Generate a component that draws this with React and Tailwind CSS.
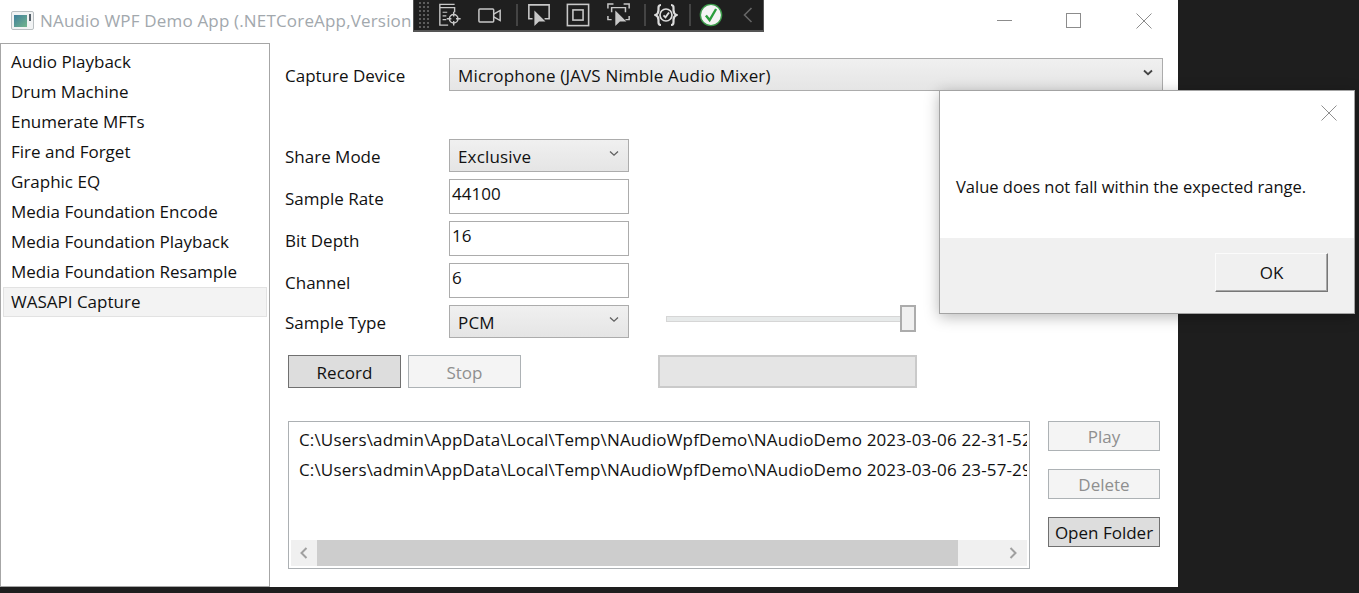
import React from "react";

const NAV_ITEMS = [
  "Audio Playback",
  "Drum Machine",
  "Enumerate MFTs",
  "Fire and Forget",
  "Graphic EQ",
  "Media Foundation Encode",
  "Media Foundation Playback",
  "Media Foundation Resample",
  "WASAPI Capture",
];

const RECORDINGS = [
  "C:\\Users\\admin\\AppData\\Local\\Temp\\NAudioWpfDemo\\NAudioDemo 2023-03-06 22-31-52.wav",
  "C:\\Users\\admin\\AppData\\Local\\Temp\\NAudioWpfDemo\\NAudioDemo 2023-03-06 23-57-29.wav",
];

function AppIcon() {
  return (
    <svg width="23" height="20" viewBox="0 0 23 20" className="shrink-0">
      <defs>
        <linearGradient id="appfill" x1="0" y1="0" x2="1" y2="1">
          <stop offset="0" stopColor="#3f7f9c" />
          <stop offset="1" stopColor="#72b58c" />
        </linearGradient>
      </defs>
      <rect x="0.5" y="0.5" width="22" height="18" rx="1.5" fill="#f1f3f4" stroke="#b9bfc2" />
      <rect x="3" y="4" width="13" height="12" fill="url(#appfill)" />
      <rect x="18" y="3" width="2" height="7" fill="#55616a" />
    </svg>
  );
}

function Chevron({ strong }) {
  return (
    <svg width="10" height="7" viewBox="0 0 10 7">
      <path
        d="M1 1.5 L5 5.2 L9 1.5"
        fill="none"
        stroke={strong ? "#444444" : "#606060"}
        strokeWidth={strong ? 1.8 : 1.3}
      />
    </svg>
  );
}

function ComboBox({ value, strong, className }) {
  return (
    <div
      className={`flex h-[33px] items-center justify-between border border-[#acacac] bg-gradient-to-b from-[#f0f0f0] to-[#e5e5e5] pl-2 pr-[9px] ${className}`}
    >
      <span className="pt-[2px] tracking-[0.17px] text-[#111]">{value}</span>
      <span className="mb-1 flex">
        <Chevron strong={strong} />
      </span>
    </div>
  );
}

function TextBox({ value }) {
  return (
    <div className="h-[35px] w-[180px] border border-[#acacac] bg-white pl-[2px] pt-px leading-[26px] text-[#111]">
      {value}
    </div>
  );
}

function Button({ children, disabled, className = "" }) {
  return (
    <div
      className={`flex items-center justify-center border ${
        disabled
          ? "border-[#adb2b5] bg-[#f4f4f4] text-[#8f8f8f]"
          : "border-[#707070] bg-[#dddddd] text-[#111]"
      } ${className}`}
    >
      {children}
    </div>
  );
}

function FieldRow({ label, tall, children }) {
  return (
    <div className="flex items-start">
      <div className={`w-[164px] text-[#111] ${tall ? "pt-[7px]" : "pt-[5px]"}`}>{label}</div>
      {children}
    </div>
  );
}

// Snoop-style debugger strip that floats above the title bar
function DebugToolbar() {
  const stroke = "#c8c8c8";
  return (
    <div className="absolute left-[413px] top-0 flex h-[32px] w-[351px] items-center border-b-2 border-l border-r border-[#555] bg-[#1f1f1f]">
      <svg width="10" height="28" viewBox="0 0 10 28" className="ml-[5px]">
        <path d="M1 1v26M5 1v26M9 1v26" stroke="#5c5c5c" strokeWidth="2" strokeDasharray="2 2" />
      </svg>
      <svg width="24" height="24" viewBox="0 0 26 26" className="ml-[9px]" fill="none" stroke={stroke}>
        <path d="M2 12V1.5h16M2 5h16v5M2 12v12h9" strokeWidth="1.5" />
        <path d="M5 10h5M5 14h4M5 18h4" strokeWidth="1.3" />
        <circle cx="17" cy="17" r="4.6" strokeWidth="1.6" />
        <path d="M17 9.5v5M17 19.5v5M9.5 17h5M19.5 17h5" strokeWidth="1.5" />
      </svg>
      <svg width="24" height="17" viewBox="0 0 26 18" className="ml-[16px]" fill="none" stroke={stroke} strokeWidth="1.6">
        <rect x="1" y="2" width="16" height="14" rx="1" />
        <path d="M17 7.5l7-4v11l-7-4" />
      </svg>
      <div className="ml-[14px] h-[22px] w-[2px] bg-[#444]" />
      <svg width="24" height="24" viewBox="0 0 26 26" className="ml-[9px]" fill="none">
        <path d="M6 17H2V2h22v15h-5" stroke={stroke} strokeWidth="1.7" />
        <path d="M8 8v17l5-5h7z" fill={stroke} />
      </svg>
      <svg width="24" height="24" viewBox="0 0 26 26" className="ml-[15px]" fill="none" stroke={stroke}>
        <rect x="1.5" y="1.5" width="23" height="23" strokeWidth="1.7" />
        <rect x="7.5" y="7.5" width="11" height="11" strokeWidth="1.7" />
      </svg>
      <svg width="24" height="24" viewBox="0 0 26 26" className="ml-[17px]" fill="none">
        <path
          d="M1 6V1h6M18 1h6v5M1 14v4h4M24 14v4h-4M5 10V5h15v5"
          stroke={stroke}
          strokeWidth="1.6"
        />
        <path d="M9 8v17l5-5h7z" fill={stroke} />
      </svg>
      <div className="ml-[13px] h-[22px] w-[2px] bg-[#444]" />
      <svg width="24" height="24" viewBox="0 0 24 24" className="ml-[8px]" fill="none" stroke="#dcdcdc" strokeWidth="2.2">
        <path d="M7 2C4 2 4.500 4.500 4.500 7S4 11 1.500 12C4 13 4.500 14.500 4.500 17S4 22 7 22" />
        <path d="M17 2c3 0 2.500 2.500 2.500 5s.5 4 3 5c-2.500 1-3 2.500-3 5s.5 5-2.500 5" />
        <circle cx="12" cy="12" r="6" strokeWidth="1.700" />
        <path d="M9.500 12.300l2 2L15 9.500" strokeWidth="1.900" />
      </svg>
      <div className="ml-[11px] h-[22px] w-[2px] bg-[#444]" />
      <svg width="24" height="24" viewBox="0 0 26 26" className="ml-[8px]">
        <circle cx="13" cy="13" r="11.5" fill="#f4f4f4" stroke="#3c9a4a" strokeWidth="1.5" />
        <path d="M7.5 13.5l4 5L18.5 6.5" fill="none" stroke="#2b9e3c" strokeWidth="2.6" />
      </svg>
      <svg width="10" height="16" viewBox="0 0 10 16" className="ml-[20px]" fill="none" stroke="#666" strokeWidth="1.6">
        <path d="M8.5 1L1.5 8l7 7" />
      </svg>
    </div>
  );
}

function ErrorDialog() {
  return (
    <div className="absolute left-[939px] top-[90px] flex h-[224px] w-[416px] flex-col border border-[#a3a3a3] bg-white shadow-[0_3px_14px_rgba(0,0,0,0.28)]">
      <div className="relative flex-1">
        <svg width="16" height="16" viewBox="0 0 16 16" className="absolute right-[17px] top-[14px]" fill="none" stroke="#8f8f8f">
          <path d="M0.5 0.5l15 15M15.5 0.5l-15 15" />
        </svg>
        <div className="pl-4 pt-[84px] text-[16.5px] leading-6 text-[#111]">
          Value does not fall within the expected range.
        </div>
      </div>
      <div className="flex h-[75px] justify-end bg-[#f0f0f0] pr-[26px] pt-[15px]">
        <div className="flex h-[39px] w-[113px] items-center justify-center border border-[#fbfbfb] border-b-[#777] border-r-[#777] bg-[#f0f0f0] text-[#111] shadow-[inset_-1px_-1px_0_#a8a8a8]">
          OK
        </div>
      </div>
    </div>
  );
}

export default function App() {
  return (
    <div className="relative h-[593px] w-[1359px] overflow-hidden bg-[#1e1e1e] font-['Open_Sans','Noto_Sans',sans-serif] text-[17px]">
      <div className="flex h-[587px] w-[1178px] flex-col bg-white">
        {/* Title bar */}
        <div className="flex h-[43px] shrink-0 items-center pb-[2px] pl-[11px]">
          <AppIcon />
          <span className="ml-[6px] whitespace-nowrap tracking-[0.17px] text-[#a2a8ad]">
            NAudio WPF Demo App (.NETCoreApp,Version
          </span>
          <div className="ml-auto flex items-center pr-[26px]">
            <div className="h-px w-[15px] bg-[#8c8c8c]" />
            <div className="ml-[54px] h-[15px] w-[15px] border border-[#8c8c8c]" />
            <svg width="16" height="16" viewBox="0 0 16 16" className="ml-[55px]" fill="none" stroke="#8c8c8c">
              <path d="M0.5 0.5l15 15M15.5 0.5l-15 15" />
            </svg>
          </div>
        </div>

        <div className="flex min-h-0 flex-1">
          {/* Demo list */}
          <div className="w-[270px] shrink-0 border border-[#a6a6a6] pl-[2px] pr-[2px] pt-[3px]">
            {NAV_ITEMS.map((item) => (
              <div
                key={item}
                className={`h-[30px] border pl-[7px] leading-[28px] text-[#111] ${
                  item === "WASAPI Capture" ? "border-[#e2e2e2] bg-[#f3f3f3]" : "border-transparent"
                }`}
              >
                {item}
              </div>
            ))}
          </div>

          {/* Capture panel */}
          <div className="min-w-0 flex-1 pl-[15px] pr-[15px] pt-[15px]">
            <FieldRow label="Capture Device">
              <ComboBox value="Microphone (JAVS Nimble Audio Mixer)" strong className="w-[714px]" />
            </FieldRow>

            <div className="mt-[48px] flex flex-col gap-[7px]">
              <FieldRow label="Share Mode">
                <ComboBox value="Exclusive" className="w-[180px]" />
              </FieldRow>
              <FieldRow label="Sample Rate" tall>
                <TextBox value="44100" />
              </FieldRow>
              <FieldRow label="Bit Depth" tall>
                <TextBox value="16" />
              </FieldRow>
              <FieldRow label="Channel" tall>
                <TextBox value="6" />
              </FieldRow>
              <FieldRow label="Sample Type">
                <ComboBox value="PCM" className="w-[180px]" />
                <div className="relative ml-[37px] h-[27px] w-[250px]">
                  <div className="mt-[11px] h-[6px] border border-[#d6d6d6] bg-[#e7eaea]" />
                  <div className="absolute right-0 top-0 h-[27px] w-[16px] border-2 border-[#acacac] bg-[#f0f0f0]" />
                </div>
              </FieldRow>
            </div>

            <div className="mt-[17px] flex pl-[3px]">
              <Button className="h-[33px] w-[113px] pt-[2px]">Record</Button>
              <Button disabled className="ml-[7px] h-[33px] w-[113px] pt-[2px]">
                Stop
              </Button>
              <div className="ml-[137px] h-[33px] w-[259px] border-2 border-[#cacaca] bg-[#e5e5e5]" />
            </div>

            <div className="mt-[33px] flex pl-[3px]">
              <div className="flex h-[148px] w-[742px] flex-col border border-[#acb0b3] p-[2px]">
                <div className="min-h-0 flex-1 overflow-hidden pl-[8px] pt-px">
                  {RECORDINGS.map((path) => (
                    <div key={path} className="h-[30px] whitespace-nowrap leading-[30px] tracking-[0.15px] text-[#111]">
                      {path}
                    </div>
                  ))}
                </div>
                <div className="flex h-[26px] shrink-0 bg-[#f0f0f0]">
                  <div className="flex w-[26px] items-center justify-center">
                    <svg width="8" height="12" viewBox="0 0 8 12" fill="none" stroke="#a0a0a0" strokeWidth="2">
                      <path d="M6.5 1L1.5 6l5 5" />
                    </svg>
                  </div>
                  <div className="w-[641px] bg-[#cdcdcd]" />
                  <div className="ml-auto flex w-[25px] items-center justify-center pr-[3px]">
                    <svg width="8" height="12" viewBox="0 0 8 12" fill="none" stroke="#a0a0a0" strokeWidth="2">
                      <path d="M1.5 1l5 5-5 5" />
                    </svg>
                  </div>
                </div>
              </div>
              <div className="ml-[18px] flex w-[112px] flex-col gap-[18px]">
                <Button disabled className="h-[30px] pt-px">Play</Button>
                <Button disabled className="h-[30px] pt-px">Delete</Button>
                <Button className="h-[30px] pt-px">Open Folder</Button>
              </div>
            </div>
          </div>
        </div>
      </div>

      <DebugToolbar />
      <ErrorDialog />
    </div>
  );
}
